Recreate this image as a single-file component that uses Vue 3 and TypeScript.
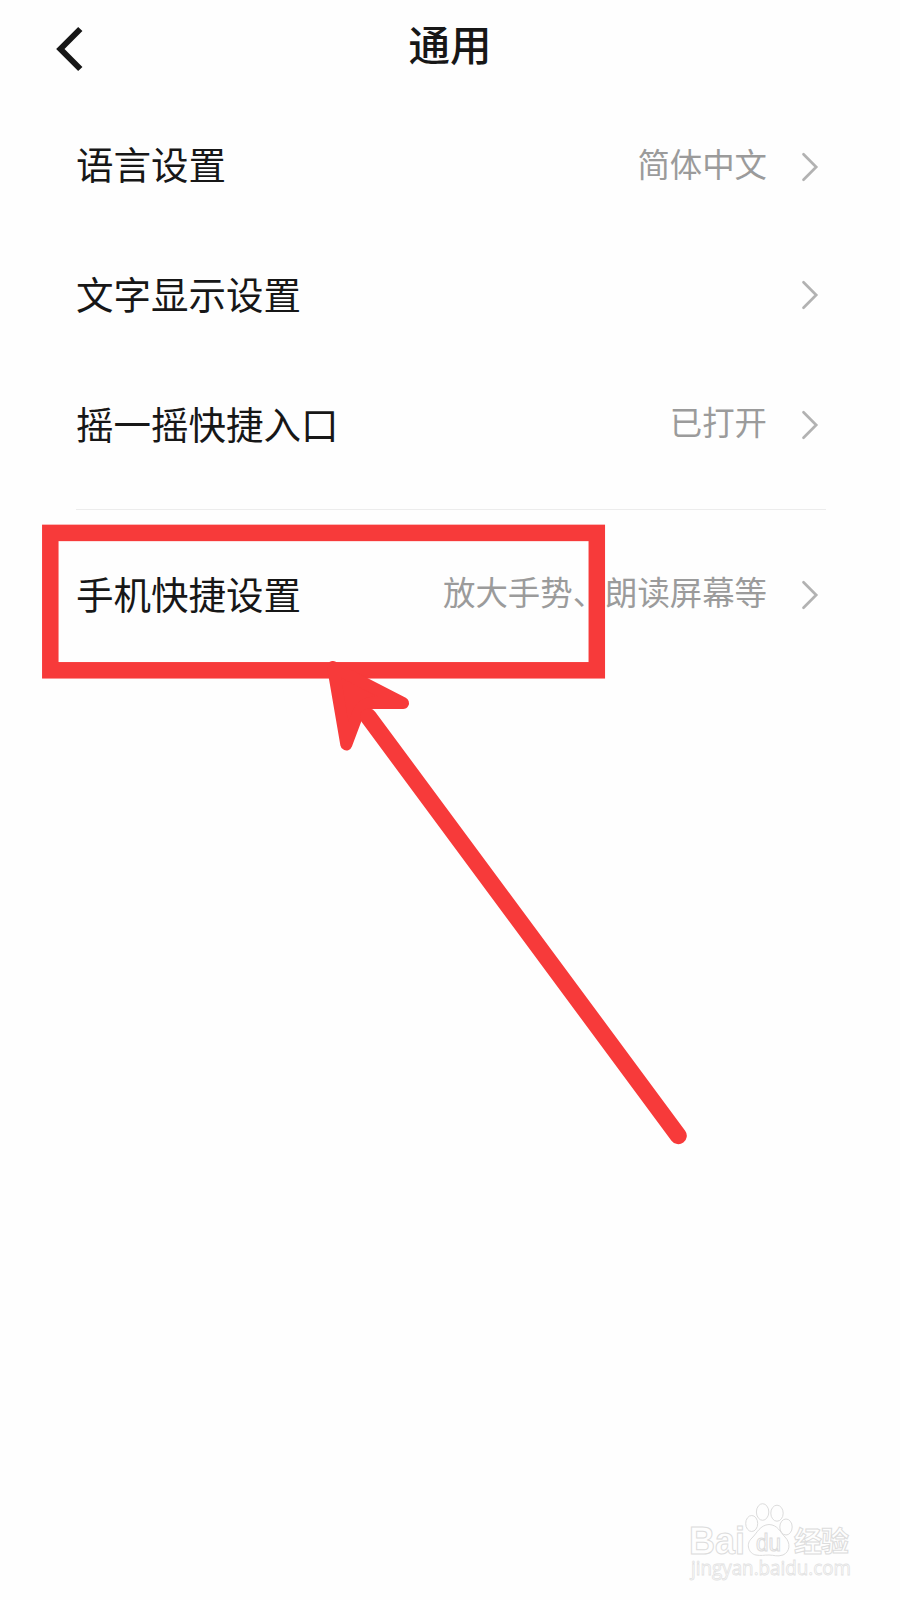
<script setup lang="ts">
interface SettingItem {
  label: string
  value?: string
}

const groups: SettingItem[][] = [
  [
    { label: '语言设置', value: '简体中文' },
    { label: '文字显示设置' },
    { label: '摇一摇快捷入口', value: '已打开' },
  ],
  [{ label: '手机快捷设置', value: '放大手势、朗读屏幕等' }],
]
</script>

<template>
  <main class="screen">
    <header class="header">
      <svg class="back" width="32" height="50" viewBox="0 0 32 50">
        <path d="M26.3 5 L6.4 25 L26.3 45" />
      </svg>
      <h1 class="title">通用</h1>
    </header>

    <section v-for="(group, index) in groups" :key="index" class="group">
      <div v-for="item in group" :key="item.label" class="row">
        <span class="label">{{ item.label }}</span>
        <span class="value">{{ item.value }}</span>
        <svg class="chevron" width="20" height="32" viewBox="0 0 20 32">
          <path d="M4.5 3.2 L17.2 16 L4.5 28.8" />
        </svg>
      </div>
    </section>

    <svg class="markup" width="900" height="1600" viewBox="0 0 900 1600">
      <rect x="50.3" y="532.9" width="546.5" height="137.4" />
      <path class="head" d="M333 667 L403 703 L372 702.8 Q363 704 358.5 712 L346.3 744.5 Z" />
      <path class="shaft" d="M368.5 717 L678.3 1135.7" />
    </svg>

    <svg class="watermark" width="180" height="90" viewBox="0 0 180 90">
      <g class="outline">
        <text class="brand" x="9" y="54" textLength="56" lengthAdjust="spacingAndGlyphs">Bai</text>
        <ellipse cx="71.7" cy="23.5" rx="6" ry="8" />
        <ellipse cx="82.6" cy="12" rx="6.2" ry="8.3" />
        <ellipse cx="97" cy="13.2" rx="6.2" ry="8" />
        <ellipse cx="106" cy="27" rx="6.2" ry="8" />
        <path d="M89 24.5 C80 25 77 33 72 38 C65 44 69 54 76 55 C81 56 84 55 89 55 C94 55 97 57 103 55 C110 52 111 43 105 37 C100 32 98 25 89 24.5 Z" />
        <text class="du" x="76" y="51" textLength="25" lengthAdjust="spacingAndGlyphs">du</text>
        <text class="cjk" x="114" y="52" textLength="55">经验</text>
      </g>
      <text class="site" x="11" y="75" textLength="160" lengthAdjust="spacingAndGlyphs">jingyan.baidu.com</text>
    </svg>
  </main>
</template>

<style>
body {
  margin: 0;
  background: #fefefe;
}
</style>

<style scoped>
.screen {
  position: relative;
  width: 900px;
  height: 1600px;
  overflow: hidden;
  background: #fefefe;
  color: #171717;
  font-family: "Noto Sans CJK SC", sans-serif;
}

.header {
  display: grid;
  grid-template-columns: 54px 1fr 54px;
  align-items: center;
  height: 97px;
  margin-bottom: 3px;
}

.back {
  margin-left: 54px;
}

.title {
  margin: 0;
  padding-bottom: 11px;
  text-align: center;
  font-size: 41.5px;
  font-weight: 500;
  line-height: 50px;
}

.group + .group {
  margin: 19px 74px 0 76px;
  padding-top: 20px;
  border-top: 1px solid #ececec;
}

.row {
  display: flex;
  align-items: center;
  height: 130px;
  padding: 0 81px 0 76px;
}

.group + .group .row {
  padding: 0 7px 0 0;
}

.label {
  flex: none;
  padding-bottom: 4px;
  font-size: 37.5px;
  line-height: 48px;
}

.value {
  flex: 1;
  padding-bottom: 9px;
  text-align: right;
  color: #9b9b9b;
  font-size: 32.4px;
  line-height: 44px;
  white-space: nowrap;
}

.chevron {
  flex: none;
  margin-left: 32px;
}

.group:first-of-type .row:first-child .value {
  padding-bottom: 5px;
}

.group:first-of-type .row:first-child .chevron {
  margin-top: 4px;
}

.back path,
.chevron path {
  fill: none;
  stroke: #161616;
  stroke-width: 6;
}

.chevron path {
  stroke: #b2b2b2;
  stroke-width: 2.7;
  stroke-linecap: round;
}

.markup {
  position: absolute;
  top: 0;
  left: 0;
  fill: none;
  stroke: #f73a3a;
  stroke-width: 16.5;
}

.head {
  fill: #f73a3a;
  stroke-width: 12;
  stroke-linejoin: round;
}

.shaft {
  stroke-width: 17;
  stroke-linecap: round;
}

.watermark {
  position: absolute;
  top: 1500px;
  left: 680px;
}

.outline {
  fill: #fefefe;
  stroke: #dcdcdc;
  stroke-width: 1;
}

.brand,
.du {
  font-family: "Liberation Sans", sans-serif;
  font-size: 38px;
  font-weight: 700;
}

.du {
  font-size: 23px;
  font-weight: 400;
}

.cjk {
  font-size: 28px;
  font-weight: 700;
}

.site {
  font-family: "Open Sans", sans-serif;
  font-size: 20px;
  fill: #fefefe;
  stroke: #e2e2e2;
  stroke-width: 0.8;
}
</style>
